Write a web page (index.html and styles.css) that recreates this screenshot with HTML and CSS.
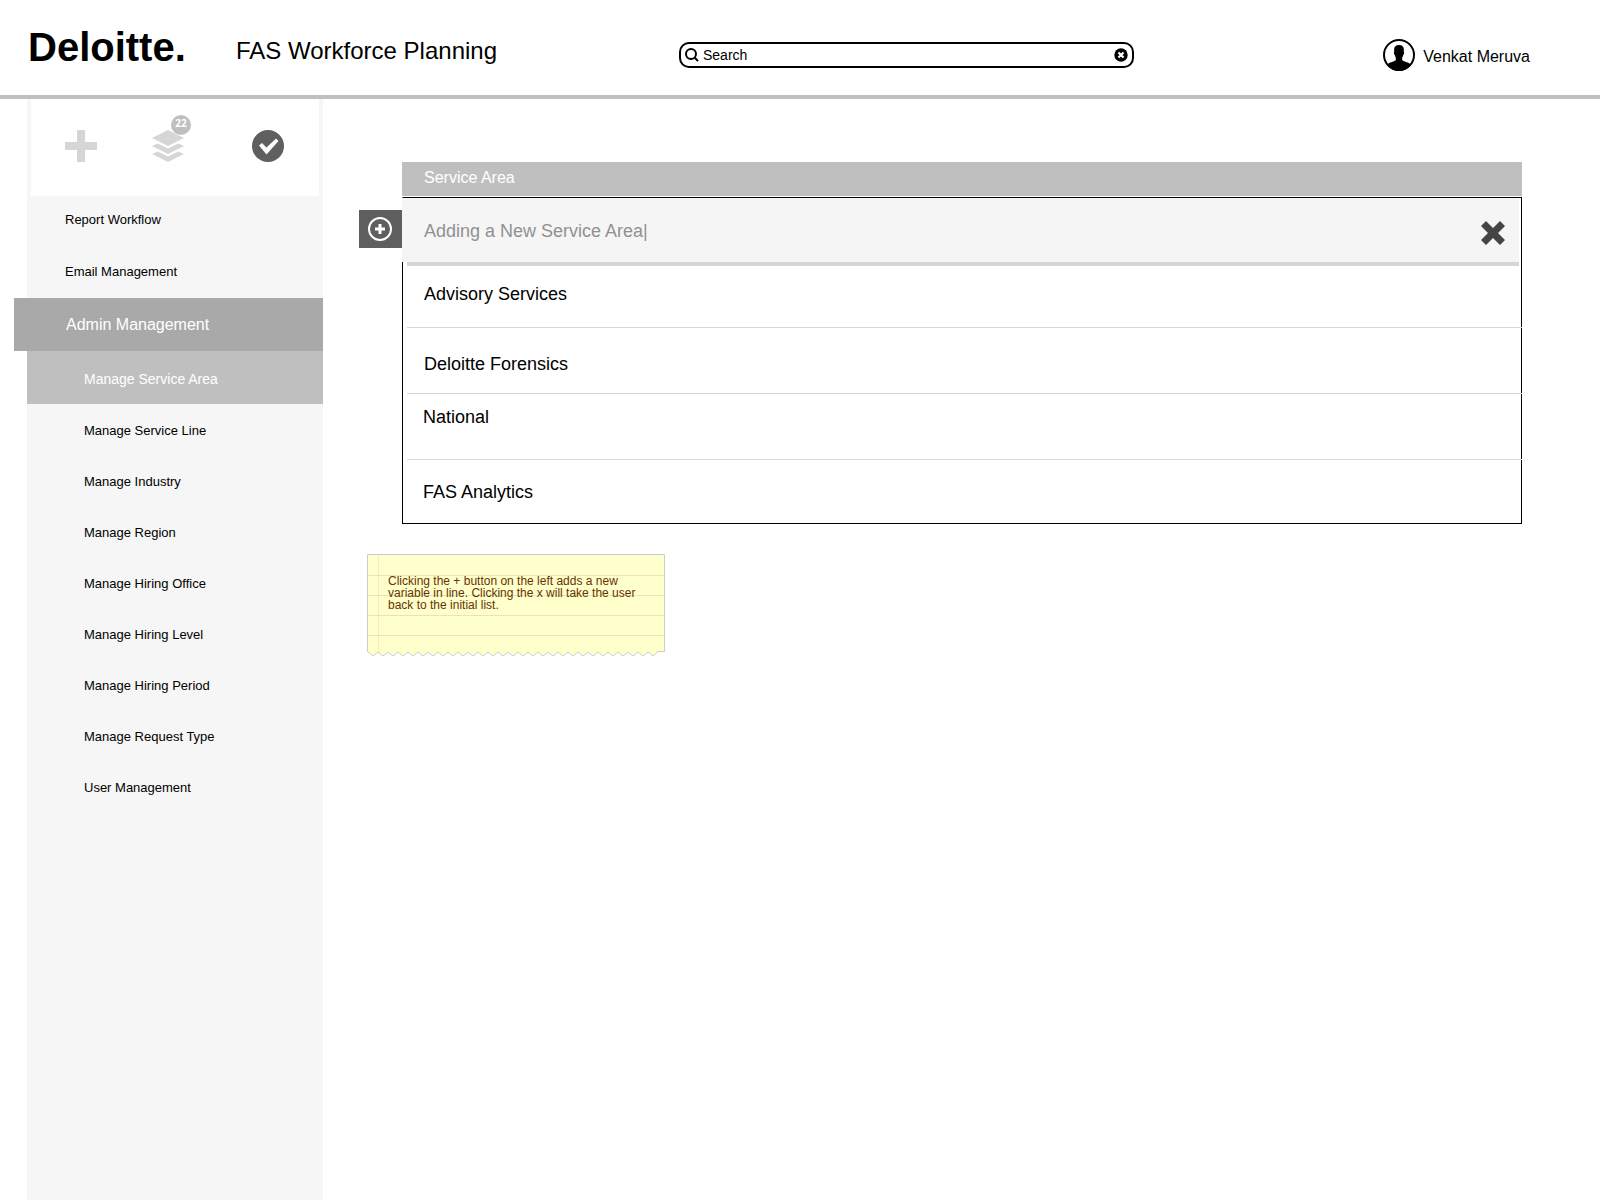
FILE: index.html
```html
<!DOCTYPE html>
<html lang="en">
<head>
    <meta charset="UTF-8">
    <meta name="viewport" content="width=device-width, initial-scale=1.0">
    <title>FAS Workforce Planning</title>
    <link rel="stylesheet" href="styles.css">
</head>
<body>
    <header class="header">
        <div class="logo">Deloitte.</div>
        <h1 class="title">FAS Workforce Planning</h1>
        <form class="search-bar">
            <svg width="14" height="14" viewBox="0 0 14 14" fill="none" stroke="#000" aria-hidden="true">
                <circle cx="6" cy="6" r="5" stroke-width="2"/>
                <path d="M9.5 9.5L13 13" stroke-width="2"/>
            </svg>
            <input type="text" value="Search" aria-label="Search">
            <button type="reset" aria-label="Clear search">
                <svg width="14" height="14" viewBox="0 0 14 14" aria-hidden="true">
                    <circle cx="7" cy="7" r="6.7"/>
                    <path d="M4.5 4.5L9.5 9.5M9.5 4.5L4.5 9.5" stroke="#fff" stroke-width="2.2"/>
                </svg>
            </button>
        </form>
        <a class="user" href="#">
            <svg width="32" height="32" viewBox="0 0 32 32" aria-hidden="true">
                <circle cx="16" cy="16" r="15" fill="#fff" stroke="#000" stroke-width="2"/>
                <path d="M16 6c-3.300 0-4.900 2-4.900 4.600l.1 2.400c-.7.3-.3 2.300.6 3 .2 1.200.6 1.900 1 2.400v2.600c-.6 1.200-4.400 2-6.500 2.900-1 .5-1.700 1-2.100 2C7 29.500 11 32 16 32s9-2.500 11.800-6.100c-.4-1-1.100-1.500-2.100-2-2.100-.9-5.900-1.700-6.500-2.900v-2.600c.4-.5.8-1.200 1-2.400.9-.7 1.300-2.700.6-3l.1-2.400C20.900 8 19.300 6 16 6z"/>
            </svg>
            <span>Venkat Meruva</span>
        </a>
    </header>

    <div class="layout">
        <aside class="sidebar">
            <div class="toolbar">
                <button type="button" class="tool" aria-label="Add">
                    <svg width="32" height="32" viewBox="0 0 32 32" fill="#d6d6d6">
                        <path d="M12 0h8v12h12v8H20v12h-8V20H0v-8h12z"/>
                    </svg>
                </button>
                <button type="button" class="tool" aria-label="Requests">
                    <svg width="32" height="32" viewBox="0 0 32 32" fill="#d6d6d6">
                        <path d="M16 0L32 8L16 16L0 8z"/>
                        <path d="M0 16L6 13.500L16 18.500L26 13.500L32 16L16 24z"/>
                        <path d="M0 24L6 21.500L16 26.500L26 21.500L32 24L16 32z"/>
                    </svg>
                    <span class="badge">22</span>
                </button>
                <button type="button" class="tool" aria-label="Approved">
                    <svg width="32" height="32" viewBox="0 0 32 32">
                        <circle cx="16" cy="16" r="16" fill="#5f5f5f"/>
                        <path d="M7 15.500L10 13L14.500 17.500L24 8.500L26.500 11L14.500 24.500z" fill="#fff"/>
                    </svg>
                </button>
            </div>
            <nav>
                <ul class="menu">
                    <li><a href="#">Report Workflow</a></li>
                    <li><a href="#">Email Management</a></li>
                    <li>
                        <a class="active" href="#">Admin Management</a>
                        <ul class="submenu">
                            <li><a class="current" href="#">Manage Service Area</a></li>
                            <li><a href="#">Manage Service Line</a></li>
                            <li><a href="#">Manage Industry</a></li>
                            <li><a href="#">Manage Region</a></li>
                            <li><a href="#">Manage Hiring Office</a></li>
                            <li><a href="#">Manage Hiring Level</a></li>
                            <li><a href="#">Manage Hiring Period</a></li>
                            <li><a href="#">Manage Request Type</a></li>
                            <li><a href="#">User Management</a></li>
                        </ul>
                    </li>
                </ul>
            </nav>
        </aside>

        <main class="content">
            <div class="editor">
                <button type="button" class="add-btn" aria-label="Add service area">
                    <svg width="24" height="24" viewBox="0 0 24 24" fill="none" stroke="#fff" aria-hidden="true">
                        <circle cx="12" cy="12" r="11" stroke-width="2"/>
                        <path d="M12 7v10M7 12h10" stroke-width="3"/>
                    </svg>
                </button>
                <table class="areas">
                    <thead>
                        <tr><th>Service Area</th></tr>
                    </thead>
                    <tbody>
                        <tr>
                            <td class="new">
                                <div class="new-row">
                                    <input type="text" value="Adding a New Service Area|" aria-label="New service area">
                                    <button type="button" aria-label="Cancel">
                                        <svg width="24" height="24" viewBox="0 0 24 24" aria-hidden="true">
                                            <path d="M5 0L12 7L19 0L24 5L17 12L24 19L19 24L12 17L5 24L0 19L7 12L0 5z" fill="#444"/>
                                        </svg>
                                    </button>
                                </div>
                            </td>
                        </tr>
                        <tr><td class="first"><div class="row">Advisory Services</div></td></tr>
                        <tr><td><div class="row row-low">Deloitte Forensics</div></td></tr>
                        <tr><td><div class="row row-top">National</div></td></tr>
                        <tr><td><div class="row">FAS Analytics</div></td></tr>
                    </tbody>
                </table>
            </div>

            <div class="note">
                <svg class="paper" width="298" height="104" viewBox="0 0 298 104" aria-hidden="true">
                    <path d="M.5 .5H297.500V97.500H291L286 102L281 98L276 102L271 98L266 102L261 98L256 102L251 98L246 102L241 98L236 102L231 98L226 102L221 98L216 102L211 98L206 102L201 98L196 102L191 98L186 102L181 98L176 102L171 98L166 102L161 98L156 102L151 98L146 102L141 98L136 102L131 98L126 102L121 98L116 102L111 98L106 102L101 98L96 102L91 98L86 102L81 98L76 102L71 98L66 102L61 98L56 102L51 98L46 102L41 98L36 102L31 98L26 102L21 98L16 102L11 98L6 102L.5 97.500z" fill="#ffc" stroke="#ccc"/>
                    <path d="M1 21.500H297M1 41.500H297M1 61.500H297M1 81.500H297" stroke="#e5e5b8"/>
                    <path d="M11.500 1V98" stroke="#ffe5b8"/>
                </svg>
                <p>Clicking the + button on the left adds a new variable in line. Clicking the x will take the user back to the initial list.</p>
            </div>
        </main>
    </div>
</body>
</html>
```

FILE: styles.css
```css
/* Base Styles */
* {
    box-sizing: border-box;
}

body {
    font-family: "Liberation Sans", Arial, sans-serif;
    font-size: 13px;
    margin: 0;
    min-height: 100vh;
    display: flex;
    flex-direction: column;
    background-color: #fff;
    color: #000;
}

a {
    color: inherit;
    text-decoration: none;
}

button {
    padding: 0;
    border: none;
    background: none;
    cursor: pointer;
}

input {
    border: none;
    outline: none;
    background: none;
    padding: 0;
    font-family: inherit;
    color: inherit;
}

svg {
    display: block;
}

/* Header Styles */
.header {
    display: grid;
    grid-template-columns: 208px 443px 1fr auto;
    align-items: center;
    height: 99px;
    padding: 14px 70px 0 28px;
    border-bottom: 4px solid #bfbfbf;
}

.logo {
    font-size: 40px;
    font-weight: bold;
    line-height: 40px;
    padding-bottom: 16px;
}

.title {
    margin: 0;
    font-size: 24px;
    font-weight: normal;
    line-height: 28px;
    padding-bottom: 8px;
}

.search-bar {
    display: flex;
    align-items: center;
    gap: 4px;
    height: 26px;
    margin-right: 249px;
    padding: 0 4px;
    border: 2px solid #000;
    border-radius: 10px;
}

.search-bar input {
    flex: 1;
    min-width: 0;
    font-size: 14px;
}

.user {
    display: flex;
    align-items: center;
    gap: 8px;
    font-size: 16px;
}

.user span {
    padding-top: 4px;
}

/* Sidebar Styles */
.layout {
    flex: 1;
    display: flex;
}

.sidebar {
    width: 296px;
    flex-shrink: 0;
    margin-left: 27px;
    background-color: #f6f6f6;
}

.toolbar {
    display: grid;
    grid-template-columns: 87px 100px 32px;
    height: 97px;
    margin: 0 4px;
    padding: 31px 35px 0 34px;
    background-color: #fff;
}

.tool {
    position: relative;
    width: 32px;
    height: 32px;
}

.badge {
    position: absolute;
    top: -15px;
    right: -7px;
    width: 20px;
    height: 20px;
    border-radius: 50%;
    background-color: #bfbfbf;
    color: #fff;
    font-family: "Open Sans", sans-serif;
    font-size: 10px;
    font-weight: bold;
    line-height: 16px;
    text-align: center;
}

.menu,
.submenu {
    list-style: none;
    margin: 0;
    padding: 0;
}

.menu {
    margin-top: -4px;
}

.menu a {
    display: flex;
    align-items: center;
    height: 52px;
    padding: 2px 0 0 38px;
}

.menu > li:nth-child(2) {
    padding-bottom: 2px;
}

.menu .active {
    height: 53px;
    margin-left: -13px;
    padding: 0 0 0 52px;
    background-color: #a9a9a9;
    color: #fff;
    font-size: 16px;
}

.menu .submenu a {
    height: 51px;
    padding-left: 57px;
}

.menu .submenu .current {
    height: 53px;
    background-color: #bfbfbf;
    color: #fff;
    font-size: 14px;
}

/* Main Content Styles */
.content {
    flex: 1;
    padding: 63px 78px 40px 36px;
}

.editor {
    display: grid;
    grid-template-columns: 43px 1fr;
    align-items: start;
}

.add-btn {
    display: flex;
    align-items: center;
    justify-content: center;
    height: 38px;
    margin-top: 48px;
    padding-right: 2px;
    background-color: #5f5f5f;
}

.areas {
    width: 100%;
    border-spacing: 0;
    border-bottom: 1px solid #000;
    font-size: 18px;
}

.areas th {
    height: 35px;
    padding: 0 0 2px 22px;
    background-color: #bfbfbf;
    border-bottom: 1px solid #fff;
    color: #fff;
    font-size: 16px;
    font-weight: normal;
    text-align: left;
}

.areas td {
    padding: 0;
    border-left: 1px solid #000;
    border-right: 1px solid #000;
}

.areas .new {
    border-top: 1px solid #000;
    border-left-color: #f5f5f5;
}

.new-row {
    display: flex;
    align-items: center;
    height: 64px;
    margin-right: 2px;
    padding: 0 14px 0 21px;
    background-color: #f5f5f5;
}

.new-row input {
    flex: 1;
    min-width: 0;
    padding-top: 2px;
    color: #919191;
    font-size: 18px;
}

.new-row button {
    padding-top: 6px;
}

.row {
    display: flex;
    align-items: center;
    height: 66px;
    margin: 0 -1px 0 4px;
    padding: 2px 0 0 16px;
    border-bottom: 1px solid #d6d6d6;
}

/* thick rule under the row being added */
.first::before {
    content: "";
    display: block;
    height: 4px;
    margin: 0 2px 0 4px;
    background-color: #d6d6d6;
}

.first .row {
    height: 62px;
    padding: 0 0 4px 17px;
}

.row-low {
    padding: 8px 0 0 17px;
}

.row-top {
    align-items: flex-start;
    padding-top: 13px;
}

tr:last-child .row {
    height: 63px;
    border-bottom: none;
}

/* Note Styles */
.note {
    position: relative;
    width: 298px;
    min-height: 104px;
    margin: 30px 0 0 8px;
    padding: 21px 20px 20px 21px;
    color: #630;
}

.note p {
    position: relative;
    margin: 0;
    font-size: 12px;
    line-height: 12px;
}

.paper {
    position: absolute;
    top: 0;
    left: 0;
}
```
